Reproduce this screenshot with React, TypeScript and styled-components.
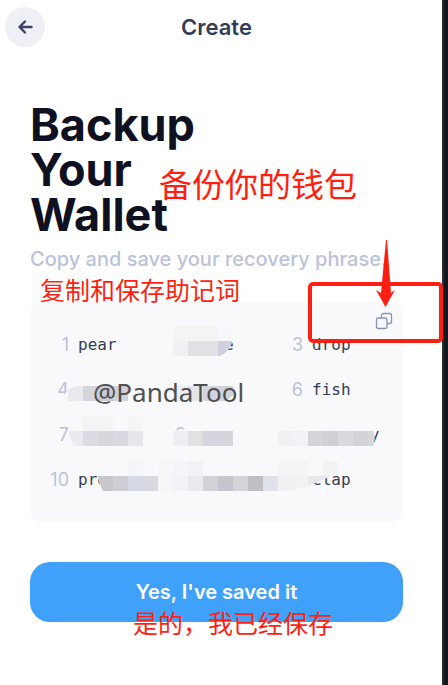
import React from "react";
import styled, { createGlobalStyle } from "styled-components";

const RED = "#ff1f12";

const GlobalStyle = createGlobalStyle`
  *, *::before, *::after { box-sizing: border-box; }
  body { margin: 0; background: #fff; font-family: Inter, sans-serif; }
`;

const Window = styled.div`
  display: flex;
  min-height: 100vh;
  overflow: hidden;
`;

const Screen = styled.div`
  flex: 1;
  min-width: 0;
  padding-right: 9px;
  background: #fff;
`;

const Edge = styled.div`
  width: 6px;
  background: #14171c;
  border-left: 2px solid #2c2c2e;
`;

const Header = styled.header`
  display: grid;
  grid-template-columns: 40px 1fr 40px;
  align-items: center;
  height: 54px;
  padding: 0 5px;
`;

const BackButton = styled.button`
  display: grid;
  place-items: center;
  width: 40px;
  height: 40px;
  padding: 0;
  border: 0;
  border-radius: 50%;
  background: #eff0f5;
`;

const HeaderTitle = styled.div`
  text-align: center;
  font-size: 22px;
  line-height: 28px;
  font-weight: 600;
  color: #343d55;
`;

const Main = styled.main`
  padding: 48px 30px 0;
`;

const Intro = styled.section`
  position: relative;
`;

const Title = styled.h1`
  width: min-content;
  margin: 0;
  font-size: 45px;
  line-height: 45px;
  font-weight: 700;
  color: #0f1121;
`;

const Subtitle = styled.p`
  margin: 7px 0 0;
  font-size: 20px;
  line-height: 30px;
  font-weight: 500;
  white-space: nowrap;
  color: #bbc2d9;
`;

const Card = styled.section`
  position: relative;
  margin-top: 28px;
  height: 220px;
  padding: 10px 7px 0 15px;
  border-radius: 12px;
  background: #f9f9fb;
`;

const CopyButton = styled.button`
  display: block;
  width: 18px;
  height: 18px;
  margin: 0 3px 0 auto;
  padding: 0;
  border: 0;
  background: none;
`;

const Words = styled.ol`
  display: grid;
  grid-template-columns: repeat(3, 1fr);
  grid-auto-rows: 45px;
  margin: -8px 0 0;
  padding: 0;
  list-style: none;
`;

const WordItem = styled.li`
  display: grid;
  grid-template-columns: 24px 1fr;
  column-gap: 9px;
  align-items: center;
`;

const WordNumber = styled.span`
  text-align: right;
  font-size: 18px;
  line-height: 24px;
  color: #bbc2d9;
`;

const Word = styled.span`
  font-family: "DejaVu Sans Mono", monospace;
  font-size: 16px;
  line-height: 24px;
  white-space: pre;
  color: #343d55;
`;

const Mosaic = styled.svg`
  position: absolute;
  left: 0;
  top: 0;
`;

const Watermark = styled.div`
  position: absolute;
  left: 63px;
  top: 72px;
  font-family: "Noto Sans", sans-serif;
  font-size: 26px;
  line-height: 36px;
  color: #4f4f4f;
`;

const Highlight = styled.div`
  position: absolute;
  right: -40px;
  top: -20px;
  width: 135px;
  height: 61px;
  border: 4px solid ${RED};
  border-radius: 5px;
  pointer-events: none;
`;

const Pointer = styled.svg`
  position: absolute;
  right: 8px;
  top: -62px;
  pointer-events: none;
`;

const Note = styled.div<{ $x: number; $y: number; $size: number }>`
  position: absolute;
  left: ${(p) => p.$x}px;
  top: ${(p) => p.$y}px;
  font-family: "Noto Sans CJK SC", sans-serif;
  font-size: ${(p) => p.$size}px;
  line-height: 36px;
  font-weight: 400;
  white-space: nowrap;
  color: ${RED};
  pointer-events: none;
`;

const Actions = styled.div`
  position: relative;
  margin-top: 40px;
`;

const PrimaryButton = styled.button`
  display: block;
  width: 100%;
  height: 60px;
  border: 0;
  border-radius: 20px;
  background: #3fa1fa;
  color: #fff;
  font-family: Inter, sans-serif;
  font-size: 20px;
  line-height: 24px;
  font-weight: 600;
`;

const words: [string, string][] = [
  ["1", "pear"], ["", "   e"], ["3", "drop"],
  ["4", ""], ["", ""], ["6", "fish"],
  ["7", ""], ["8", ""], ["", "      y"],
  ["10", "pro"], ["", ""], ["", "clap"],
];

type Tile = [number, number, string];

const T = 15;
const tiles: Tile[] = [
  [143, 24, "#f4f4f5"], [158, 24, "#f4f4f5"], [173, 24, "#f4f4f5"], [188, 24, "#f7f8fc"],
  [143, 39, "#eff1f5"], [158, 39, "#e1e0e4"], [173, 39, "#e1e0e4"], [188, 39, "#cfd2dc"],
  [38, 84, "#e9eaec"], [53, 84, "#d4d6dd"], [68, 84, "#c9cbd5"], [83, 84, "#d1d3da"],
  [143, 84, "#eeeff2"], [158, 84, "#e4e4e8"], [173, 84, "#d4d5dc"], [188, 84, "#d2d3da"],
  [53, 114, "#f4f4f6"], [68, 114, "#f4f4f6"], [98, 114, "#f5f5f7"],
  [38, 129, "#eaebed"], [53, 129, "#dbdce3"], [68, 129, "#d8d7dc"], [83, 129, "#d9dae1"], [98, 129, "#e6e7ea"],
  [143, 129, "#eeedf3"], [158, 129, "#e1e0e2"], [173, 129, "#d4d5df"], [188, 129, "#d5d5de"],
  [248, 129, "#f1f0f4"], [263, 129, "#f3f3f7"], [278, 129, "#d5d4d9"], [293, 129, "#d1cfd6"],
  [308, 129, "#d9dae0"], [323, 129, "#d2d3d9"], [338, 129, "#d7d6db"],
  [98, 159, "#f5f5f7"], [128, 159, "#f7f7f8"], [143, 159, "#f5f5f9"], [158, 159, "#f1f2f5"],
  [248, 159, "#f4f4f5"], [263, 159, "#f5f5f7"], [293, 159, "#f3f3f4"],
  [68, 174, "#c7c8cd"], [83, 174, "#cecfd4"], [98, 174, "#d5d9e4"], [113, 174, "#d8dae1"],
  [128, 174, "#f6f6f8"], [143, 174, "#f1f3f8"], [158, 174, "#e9eaed"], [173, 174, "#d2d3d8"],
  [188, 174, "#c5c5d0"], [203, 174, "#d4d3d8"], [218, 174, "#bfc0c5"], [233, 174, "#dee2ea"],
  [248, 174, "#f1f1f3"], [263, 174, "#f2f2f4"], [278, 174, "#e8e8eb"], [293, 174, "#e7e7ea"],
];

const brush = [
  "M143 24H203V33Q202 49 190 54H143Z",
  "M32 99Q36 84 50 84H98V99Z",
  "M143 84H208Q204 94 195 99H143Z",
  "M38 114H113V144H44Q39 136 38 124Z",
  "M143 129Q148 128 158 127Q168 124 180 125H203V144H143Z",
  "M248 125H308V129H343Q346 136 343 144H248Z",
  "M98 159H173V174H248V159H308V171L278 184L262 189H73Q69 182 68 174H98Z",
];

function MosaicTrail() {
  return (
    <Mosaic width="373" height="220" viewBox="0 0 373 220" aria-hidden="true">
      <defs>
        <clipPath id="brush">
          {brush.map((d) => <path key={d} d={d} />)}
        </clipPath>
      </defs>
      <g clipPath="url(#brush)" shapeRendering="crispEdges">
        <rect width="373" height="220" fill="#f9f9fb" />
        {tiles.map(([x, y, fill]) => (
          <rect key={`${x}-${y}`} x={x} y={y} width={T} height={T} fill={fill} />
        ))}
      </g>
    </Mosaic>
  );
}

export default function App() {
  return (
    <>
      <GlobalStyle />
      <Window>
        <Screen>
          <Header>
            <BackButton aria-label="Back">
              <svg width="16" height="16" viewBox="0 0 16 16" fill="none" stroke="#3c4166" strokeWidth="2.4" strokeLinecap="round" strokeLinejoin="round">
                <path d="M14.500 8H2.500M8 2.500L2.500 8 8 13.500" />
              </svg>
            </BackButton>
            <HeaderTitle>Create</HeaderTitle>
          </Header>
          <Main>
            <Intro>
              <Title>Backup Your Wallet</Title>
              <Subtitle>Copy and save your recovery phrase.</Subtitle>
              <Note $x={129} $y={63} $size={33}>备份你的钱包</Note>
            </Intro>
            <Card>
              <CopyButton aria-label="Copy recovery phrase">
                <svg width="18" height="18" viewBox="0 0 18 18" fill="none" stroke="#8a90b8" strokeWidth="1.3">
                  <rect x="1.500" y="6" width="10.500" height="10.500" rx="1.800" />
                  <path d="M6.500 6V3.500a2 2 0 0 1 2-2h6a2 2 0 0 1 2 2v6a2 2 0 0 1-2 2h-2.500" />
                </svg>
              </CopyButton>
              <Words>
                {words.map(([n, w], i) => (
                  <WordItem key={i}>
                    <WordNumber>{n}</WordNumber>
                    <Word>{w}</Word>
                  </WordItem>
                ))}
              </Words>
              <MosaicTrail />
              <Watermark>@PandaTool</Watermark>
              <Note $x={10} $y={-31} $size={25}>复制和保存助记词</Note>
              <Highlight />
              <Pointer width="20" height="68" viewBox="0 0 20 68" aria-hidden="true">
                <path d="M11 0h1l4 53 4-3-9.500 17L1 50l5 3z" fill={RED} />
              </Pointer>
            </Card>
            <Actions>
              <PrimaryButton>Yes, I've saved it</PrimaryButton>
              <Note $x={103} $y={42} $size={25}>是的，我已经保存</Note>
            </Actions>
          </Main>
        </Screen>
        <Edge />
      </Window>
    </>
  );
}
